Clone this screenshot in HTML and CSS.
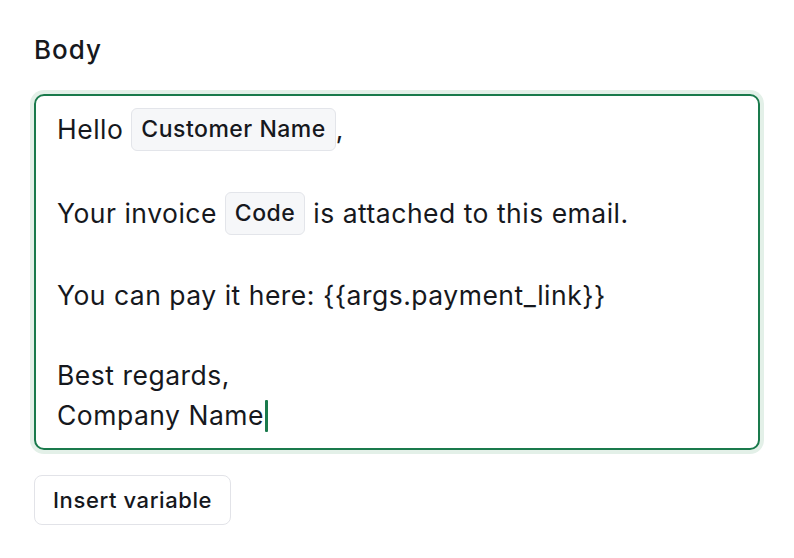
FILE: index.html
```html
<!DOCTYPE html>
<html lang="en">
<head>
<meta charset="utf-8">
<link rel="stylesheet" href="styles.css">
</head>
<body>
<div class="field">
  <div class="label">Body</div>
  <div class="editor">
    <div class="line chipline">Hello <span class="chip">Customer Name</span>,</div>
    <div class="line empty"></div>
    <div class="line chipline">Your invoice <span class="chip">Code</span> is attached to this email.</div>
    <div class="line empty"></div>
    <div class="line">You can pay it here: {{args.payment_link}}</div>
    <div class="line empty"></div>
    <div class="line">Best regards,</div>
    <div class="line">Company Name<span class="caret"></span></div>
  </div>
  <button class="btn">Insert variable</button>
</div>
</body>
</html>
```
FILE: styles.css
```css
html, body {
  margin: 0;
  padding: 0;
  background: #ffffff;
}
body {
  font-family: Inter, "Noto Sans", sans-serif;
  color: #16181d;
}
.field {
  padding: 34px 34px 0 34px;
  display: flex;
  flex-direction: column;
  align-items: flex-start;
}
.label {
  font-size: 26px;
  font-weight: 450;
  letter-spacing: 1px;
  line-height: 32px;
  margin-bottom: 28px;
}
.editor {
  box-sizing: border-box;
  width: 726px;
  height: 356px;
  border: 2px solid #1a7a4c;
  border-radius: 10px;
  box-shadow: 0 0 0 4px #e3f0e8;
  padding: 11px 21px;
  font-size: 26.5px;
  letter-spacing: 0.5px;
}
.line {
  line-height: 40px;
  height: 40px;
  white-space: nowrap;
}
.line.chipline {
  height: 44px;
  line-height: 44px;
}
.chip {
  display: inline-block;
  box-sizing: border-box;
  height: 43px;
  line-height: 41px;
  padding: 0 9px;
  font-size: 23px;
  letter-spacing: 0.5px;
  font-weight: 450;
  background: #f6f7f9;
  border: 1px solid #e3e5ea;
  border-radius: 6px;
  vertical-align: middle;
  margin-top: -4px;
}
.caret {
  display: inline-block;
  width: 3px;
  height: 32px;
  margin-left: 1px;
  background: #1a7a4c;
  border-radius: 1px;
  vertical-align: -7px;
}
.btn {
  margin-top: 25px;
  height: 50px;
  padding: 0 18px;
  font-family: Inter, "Noto Sans", sans-serif;
  font-size: 22px;
  letter-spacing: 0.6px;
  font-weight: 450;
  color: #16181d;
  background: #ffffff;
  border: 1px solid #e2e3e8;
  border-radius: 8px;
}
```
